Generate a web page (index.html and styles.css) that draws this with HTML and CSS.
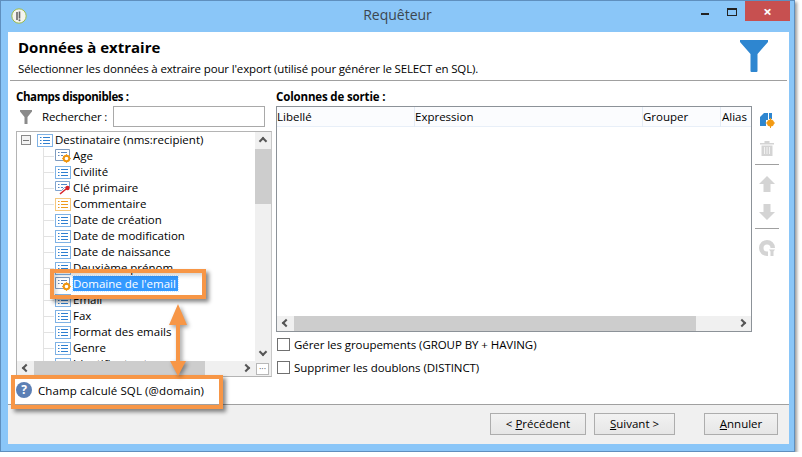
FILE: index.html
```html
<!DOCTYPE html>
<html>
  <head>
    <meta charset="UTF-8">
    <title>Requêteur</title>
    <link rel="stylesheet" href="styles.css">
  </head>
  <body>
    <svg class="defs" width="0" height="0">
      <symbol id="list" viewBox="0 0 16 13">
        <rect x="0.5" y="0.5" width="15" height="12" fill="#fff" stroke="#7fb2e5"/>
        <path d="M3 3.5h1.5M3 6.5h1.5M3 9.5h1.5" stroke="#2f7fd0"/>
        <path d="M6 3.5h7M6 6.5h7M6 9.5h7" stroke="#2f7fd0"/>
      </symbol>
      <symbol id="list-orange" viewBox="0 0 16 13">
        <rect x="0.5" y="0.5" width="15" height="12" fill="#fff" stroke="#f5c77e"/>
        <path d="M3 3.5h1.5M3 6.5h1.5M3 9.5h1.5M6 3.5h7M6 6.5h7M6 9.5h7" stroke="#ee9a1e"/>
      </symbol>
      <symbol id="list-calc" viewBox="0 0 16 14">
        <path d="M.5.5h14v7h-6v4h-8z" fill="#fff" stroke="#7f9cc0"/>
        <path d="M3 3.5h1.5M6 3.5h6M3 6.5h1.5M6 6.5h2" stroke="#5f86b8"/>
        <circle cx="11.5" cy="9.5" r="2.8" fill="none" stroke="#f0960f" stroke-width="2"/>
        <path d="M11.5 5.2v1.4M11.5 12.4v1.4M7.2 9.5h1.4M14.4 9.5h1.4" stroke="#f0960f"/>
      </symbol>
      <symbol id="list-key" viewBox="0 0 16 14">
        <path d="M.5.5h14v6h-5l-3 3h-6z" fill="#fff" stroke="#7fa4d0"/>
        <path d="M3 3.5h1.5M6 3.5h6M3 6.5h1.5M6 6.5h2" stroke="#4f86c8"/>
        <path d="M5 13l6-5" stroke="#d8232a" stroke-width="1.6"/>
        <circle cx="12.5" cy="7" r="2.2" fill="#d8232a"/>
      </symbol>
    </svg>

    <div class="window">
      <header class="titlebar">
        <svg class="app-icon" width="16" height="16" viewBox="0 0 16 16">
          <circle cx="8" cy="8" r="7.2" fill="#f4f4ee" stroke="#9dbb4a"/>
          <path d="M6 4v8M8.5 3.5v7" stroke="#666" stroke-width="1.6"/>
          <circle cx="8.5" cy="12.3" r="1" fill="#666"/>
        </svg>
        <span class="title">Requêteur</span>
        <span class="win-min"></span>
        <span class="win-max"></span>
        <span class="win-close">×</span>
      </header>

      <div class="dialog">
        <section class="intro">
          <div>
            <h1>Données à extraire</h1>
            <p>Sélectionner les données à extraire pour l'export (utilisé pour générer le SELECT en SQL).</p>
          </div>
          <svg class="intro-funnel" width="28" height="32" viewBox="0 0 28 32">
            <path d="M0 0h28v2L17.5 14v17a1 1 0 0 1-1 1h-5a1 1 0 0 1-1-1V14L0 2z" fill="#2e86d0"/>
          </svg>
        </section>

        <section class="main">
          <div class="left">
            <div class="heading heading-fields">Champs disponibles :</div>
            <div class="search">
              <svg class="search-funnel" width="12" height="14" viewBox="0 0 12 14">
                <path d="M0 0h12v1.5L7.5 7v7h-3V7L0 1.500z" fill="#8a8a8a"/>
              </svg>
              <label for="search-input">Rechercher :</label>
              <input id="search-input" type="text">
            </div>

            <div class="tree">
              <div class="tree-view">
                <div class="root-row">
                  <span class="expander"></span>
                  <svg class="ico" width="16" height="13"><use href="#list"/></svg>
                  <span class="node">Destinataire (nms:recipient)</span>
                </div>
                <ul class="children">
                  <li><svg class="ico" width="16" height="14"><use href="#list-calc"/></svg><span class="node">Age</span></li>
                  <li><svg class="ico" width="16" height="13"><use href="#list"/></svg><span class="node">Civilité</span></li>
                  <li><svg class="ico" width="16" height="14"><use href="#list-key"/></svg><span class="node">Clé primaire</span></li>
                  <li><svg class="ico" width="16" height="13"><use href="#list-orange"/></svg><span class="node">Commentaire</span></li>
                  <li><svg class="ico" width="16" height="13"><use href="#list"/></svg><span class="node">Date de création</span></li>
                  <li><svg class="ico" width="16" height="13"><use href="#list"/></svg><span class="node">Date de modification</span></li>
                  <li><svg class="ico" width="16" height="13"><use href="#list"/></svg><span class="node">Date de naissance</span></li>
                  <li><svg class="ico" width="16" height="13"><use href="#list"/></svg><span class="node">Deuxième prénom</span></li>
                  <li><svg class="ico" width="16" height="14"><use href="#list-calc"/></svg><span class="node selected">Domaine de l'email</span></li>
                  <li><svg class="ico" width="16" height="13"><use href="#list"/></svg><span class="node">Email</span></li>
                  <li><svg class="ico" width="16" height="13"><use href="#list"/></svg><span class="node">Fax</span></li>
                  <li><svg class="ico" width="16" height="13"><use href="#list"/></svg><span class="node">Format des emails</span></li>
                  <li><svg class="ico" width="16" height="13"><use href="#list"/></svg><span class="node">Genre</span></li>
                  <li><svg class="ico" width="16" height="13"><use href="#list"/></svg><span class="node">Identifiant externe</span></li>
                </ul>
              </div>
              <div class="vbar">
                <span class="chev up"></span>
                <span class="vthumb"></span>
                <span class="chev down"></span>
              </div>
              <div class="hbar">
                <span class="chev left-c"></span>
                <span class="hthumb"></span>
                <span class="chev right-c"></span>
              </div>
              <div class="corner"><span class="corner-btn">···</span></div>
            </div>

            <div class="status">
              <span class="help">?</span>
              <span class="status-text">Champ calculé SQL (@domain)</span>
            </div>
          </div>

          <div class="right">
            <div class="heading heading-columns">Colonnes de sortie :</div>
            <div class="grid-box">
              <div class="grid-head">
                <span>Libellé</span>
                <span>Expression</span>
                <span>Grouper</span>
                <span>Alias</span>
              </div>
              <div class="grid-body"></div>
              <div class="hbar grid-bar">
                <span class="chev left-c"></span>
                <span class="grid-thumb"></span>
                <span class="chev right-c"></span>
              </div>
            </div>
            <label class="check"><input type="checkbox">Gérer les groupements (GROUP BY + HAVING)</label>
            <label class="check"><input type="checkbox">Supprimer les doublons (DISTINCT)</label>
          </div>

          <div class="tools">
            <svg class="tool" width="16" height="16" viewBox="0 0 16 16">
              <path d="M1 5l4-4h4v7H7v6H1z" fill="#2e86d0"/>
              <path d="M10 1h3v6h-3z" fill="#2e86d0"/>
              <circle cx="11.500" cy="11" r="3.500" fill="#f39a12"/>
              <path d="M11.500 6v10M6.500 11h10" stroke="#f39a12"/>
            </svg>
            <svg class="tool" width="16" height="16" viewBox="0 0 16 16">
              <path d="M1 3h14v1.500H1zM5.500 1h5v2h-5z" fill="#d4d4d4"/>
              <path d="M2.500 5.500h11V16h-11z" fill="#d4d4d4"/>
              <path d="M5.500 7v7M8 7v7M10.500 7v7" stroke="#f2f2f2"/>
            </svg>
            <span class="sep"></span>
            <svg class="tool" width="16" height="16" viewBox="0 0 16 16">
              <path d="M8 0l8 8h-4.500v8h-7V8H0z" fill="#d4d4d4"/>
            </svg>
            <svg class="tool" width="16" height="16" viewBox="0 0 16 16">
              <path d="M8 16L0 8h4.500V0h7v8H16z" fill="#d4d4d4"/>
            </svg>
            <span class="sep"></span>
            <svg class="tool" width="16" height="16" viewBox="0 0 16 16">
              <path d="M8 0a8 8 0 1 0 0 16h1v-4.500H8A3.500 3.500 0 1 1 11.500 8H16a8 8 0 0 0-8-8z" fill="#d4d4d4"/>
              <path d="M10 9.500h6l-1.500 2v4.500h-3v-4.500z" fill="#d4d4d4"/>
            </svg>
          </div>
        </section>

        <footer class="actions">
          <button>&lt; <u>P</u>récédent</button>
          <button class="btn-next"><u>S</u>uivant &gt;</button>
          <button class="btn-cancel"><u>A</u>nnuler</button>
        </footer>
      </div>

      <div class="callout callout-field"></div>
      <div class="callout callout-status"></div>
      <svg class="link-arrow" width="22" height="76" viewBox="0 0 22 76">
        <path d="M11 1l9 21h-7v36h6l-8 15-8-15h6V22H2z" fill="#f79646"/>
      </svg>
    </div>
  </body>
</html>
```

FILE: styles.css
```css
* {
  box-sizing: border-box;
}
body {
  margin: 0;
  background-color: white;
  font-family: 'Open Sans', sans-serif;
  font-size: 11.5px;
  color: #000;
}
.defs {
  position: absolute;
}
.window {
  position: relative;
  width: 795px;
  height: 452px;
  display: flex;
  flex-direction: column;
  background-color: #8ac6f8;
  border: 1px solid #5f8fbe;
  box-shadow: 2px 2px 3px #0006;
}
.titlebar {
  position: relative;
  height: 31px;
  flex: none;
  display: flex;
  justify-content: center;
  padding-top: 4px;
}
.title {
  font-size: 14px;
  color: #3c4650;
}
.app-icon {
  position: absolute;
  left: 10px;
  top: 7px;
}
.win-min {
  position: absolute;
  left: 700px;
  top: 12px;
  width: 8px;
  height: 2px;
  background-color: #222;
}
.win-max {
  position: absolute;
  left: 726px;
  top: 7px;
  width: 10px;
  height: 8px;
  border: 1px solid #222;
  border-top-width: 2px;
}
.win-close {
  position: absolute;
  left: 744px;
  top: 0;
  width: 45px;
  height: 20px;
  background-color: #c75050;
  color: white;
  font-size: 15px;
  line-height: 20px;
  font-weight: 700;
  text-align: center;
}
.dialog {
  flex: 1;
  margin: 0 5px 7px 7px;
  display: flex;
  flex-direction: column;
  background-color: white;
}
.intro {
  height: 49px;
  flex: none;
  margin: 0 2px;
  padding: 6px 19px 0 8px;
  display: flex;
  justify-content: space-between;
  border-bottom: 1px solid #a0a0a0;
}
.intro-funnel {
  margin-top: 2px;
}
.intro h1 {
  margin: 0;
  font-size: 15px;
  line-height: 18px;
  font-weight: 700;
}
.intro p {
  margin: 5px 0 0;
  line-height: 16px;
  letter-spacing: -0.15px;
}
.main {
  flex: 1;
  display: flex;
  padding: 8px 0 0 8px;
}
.heading {
  height: 16px;
  line-height: 16px;
  font-weight: 700;
}
.heading-fields {
  letter-spacing: -0.4px;
}
.heading-columns {
  letter-spacing: -0.15px;
}
.left {
  width: 256px;
  flex: none;
  margin-right: 4px;
}
.search {
  height: 21px;
  margin-top: 1px;
  margin-bottom: 4px;
  display: flex;
  align-items: center;
}
.search-funnel {
  margin-left: 4px;
}
.search label {
  margin-left: 10px;
  width: 71px;
  letter-spacing: -0.15px;
}
.search input {
  width: 152px;
  height: 21px;
  border: 1px solid #a9a9a9;
  background-color: white;
  outline: none;
}
.tree {
  height: 246px;
  display: grid;
  grid-template-columns: 1fr 16px;
  grid-template-rows: 1fr 15px;
  border: 1px solid #b4b4b4;
  border-right-color: #c8c8c8;
}
.tree-view {
  overflow: hidden;
  background-color: white;
}
.root-row {
  height: 16px;
  display: flex;
  align-items: center;
  padding-left: 4px;
}
.expander {
  width: 10px;
  height: 10px;
  margin-right: 6px;
  border: 1px solid #8a8a8a;
  background: linear-gradient(#777, #777) center / 6px 1px no-repeat, #f4f4f4;
}
.ico {
  flex: none;
  margin-right: 2px;
}
.node {
  margin-top: -2px;
}
.children {
  list-style: none;
  margin: 0 0 0 26px;
  padding: 0;
  border-left: 1px solid #e2e2e2;
}
.children li {
  height: 16px;
  display: flex;
  align-items: center;
  padding-left: 11px;
  white-space: nowrap;
  background: linear-gradient(#e2e2e2, #e2e2e2) 0 8px / 10px 1px no-repeat;
}
.selected {
  background-color: #3399ff;
  color: white;
  outline: 1px dotted #cfe6ff;
  line-height: 15px;
  padding-right: 2px;
}
.vbar {
  position: relative;
  background-color: #f0f0f0;
}
.vthumb {
  position: absolute;
  top: 17px;
  left: 0;
  width: 16px;
  height: 55px;
  background-color: #cdcdcd;
}
.hbar {
  position: relative;
  background-color: #f0f0f0;
}
.hthumb {
  position: absolute;
  left: 17px;
  top: 0;
  width: 171px;
  height: 15px;
  background-color: #cdcdcd;
}
.corner {
  background-color: #f0f0f0;
  padding: 2px 1px 0 1px;
}
.corner-btn {
  display: block;
  height: 12px;
  width: 13px;
  border: 1px solid #b8b8b8;
  background-color: white;
  color: #555;
  font-size: 9px;
  line-height: 9px;
  text-align: center;
}
.chev {
  position: absolute;
  width: 6px;
  height: 6px;
  border-left: 2px solid #555;
  border-top: 2px solid #555;
}
.up {
  left: 5px;
  top: 6px;
  transform: rotate(45deg);
}
.down {
  left: 5px;
  bottom: 6px;
  transform: rotate(225deg);
}
.left-c {
  left: 6px;
  top: 4px;
  transform: rotate(-45deg);
}
.right-c {
  right: 6px;
  top: 4px;
  transform: rotate(135deg);
}
.status {
  height: 27px;
  display: flex;
  align-items: center;
  padding-bottom: 1px;
}
.status-text {
  letter-spacing: 0.1px;
}
.help {
  width: 16px;
  height: 16px;
  margin-right: 6px;
  border-radius: 50%;
  background-color: #5b7fb5;
  color: white;
  font-size: 12px;
  font-weight: 700;
  line-height: 16px;
  text-align: center;
}
.right {
  width: 476px;
  flex: none;
  margin-right: 3px;
}
.grid-box {
  height: 226px;
  margin-top: 1px;
  margin-bottom: 1px;
  display: flex;
  flex-direction: column;
  border: 1px solid #8c9298;
}
.grid-head {
  height: 20px;
  flex: none;
  display: grid;
  grid-template-columns: 138px 228px 78px 1fr;
  background-color: #fbfcfe;
  border-bottom: 1px solid #e8eff8;
  line-height: 20px;
}
.grid-head span {
  border-right: 1px solid #e3ebf5;
}
.grid-head span:last-child {
  padding-left: 1px;
  border-right: none;
}
.grid-body {
  flex: 1;
}
.grid-bar {
  height: 15px;
  flex: none;
}
.grid-thumb {
  position: absolute;
  left: 17px;
  top: 0;
  width: 402px;
  height: 15px;
  background-color: #cdcdcd;
}
.check {
  height: 23px;
  display: flex;
  align-items: center;
  letter-spacing: -0.07px;
}
.check input {
  appearance: none;
  width: 13px;
  height: 13px;
  margin: 0 4px 0 1px;
  border: 1px solid #707070;
  background-color: white;
}
.tools {
  width: 24px;
  flex: none;
  display: flex;
  flex-direction: column;
  align-items: center;
  padding-top: 23px;
}
.tool + .tool {
  margin-top: 12px;
}
.sep {
  width: 24px;
  height: 1px;
  margin: 8px 0 11px;
  background-color: #a0a0a0;
}
.actions {
  height: 40px;
  flex: none;
  display: flex;
  align-items: flex-start;
  justify-content: flex-end;
  padding: 8px 11px 0 0;
  background-color: #f0f0f0;
  border-top: 1px solid #a0a0a0;
}
.actions button {
  width: 96px;
  height: 22px;
  padding: 0 0 2px;
  border: 1px solid #adadad;
  background: linear-gradient(#f2f2f2, #e6e6e6);
  font-family: inherit;
  font-size: 11.5px;
  color: #000;
}
.actions .btn-next {
  width: 81px;
  margin-left: 8px;
}
.actions .btn-cancel {
  width: 74px;
  margin-left: 29px;
}
.callout {
  position: absolute;
  border: 4px solid #f79646;
  box-shadow: 3px 3px 4px #0007;
}
.callout-field {
  left: 49px;
  top: 268px;
  width: 156px;
  height: 30px;
  box-shadow: 3px 3px 4px #0007, inset 4px 4px 5px -2px #0003;
}
.callout-status {
  left: 10px;
  top: 374px;
  width: 212px;
  height: 34px;
}
.link-arrow {
  position: absolute;
  left: 166px;
  top: 302px;
  filter: drop-shadow(2px 2px 2px #0006);
}
```
